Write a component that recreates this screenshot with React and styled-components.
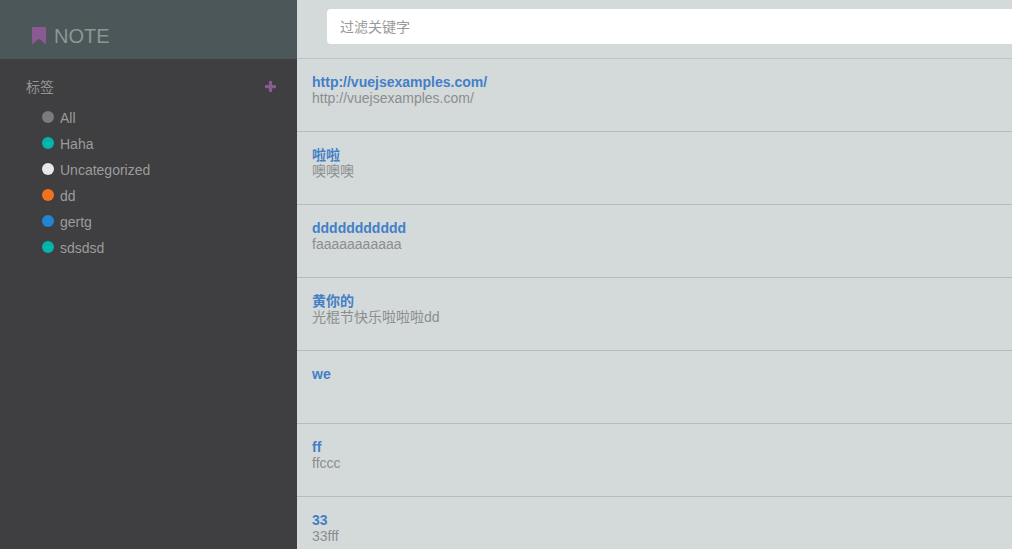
import React, { useState } from "react";
import styled, { createGlobalStyle } from "styled-components";

const GlobalStyle = createGlobalStyle`
  * {
    box-sizing: border-box;
  }
  body {
    margin: 0;
    background: #d4dada;
    font-family: "Liberation Sans", Arial, "Noto Sans CJK SC", sans-serif;
    font-size: 14px;
    line-height: 16px;
    color: #8b8e8e;
  }
`;
const Page = styled.div`
  display: flex;
  height: 100vh;
`;
const Sidebar = styled.aside`
  flex: 0 0 297px;
  background: #3f3e40;
`;
const Brand = styled.h1`
  display: flex;
  align-items: center;
  height: 59px;
  margin: 0;
  padding: 12px 32px 0;
  gap: 8px;
  background: #4b5759;
  color: #8f9596;
  font-size: 20px;
  font-weight: normal;
  line-height: 24px;
`;
const TagHeader = styled.div`
  display: flex;
  align-items: center;
  justify-content: space-between;
  padding: 20px 21px 0 26px;

  h2 {
    margin: 0;
    color: #949494;
    font-size: 14px;
    font-weight: normal;
    line-height: 16px;
  }
`;
const AddButton = styled.button`
  display: flex;
  padding: 0 0 1px;
  border: none;
  background: none;
  cursor: pointer;
`;
const TagList = styled.ul`
  margin: 0;
  padding: 10px 0 0 42px;
  list-style: none;
`;
const TagItem = styled.li`
  display: flex;
  align-items: center;
  height: 26px;
`;
const TagLink = styled.a`
  display: flex;
  gap: 6px;
  color: #9c9c9c;
  text-decoration: none;
`;
const Dot = styled.span`
  width: 12px;
  height: 12px;
  margin-top: 1px;
  border-radius: 50%;
  background: ${(props) => props.$color};
`;
const Main = styled.main`
  flex: 1;
  min-width: 0;
  overflow-y: auto;
  scrollbar-width: none;
`;
const SearchBar = styled.div`
  height: 59px;
  padding: 9px 0 0 30px;
  border-bottom: 1px solid #bfc5c5;
`;
const SearchInput = styled.input`
  display: block;
  width: 100%;
  height: 35px;
  padding: 0 13px;
  border: none;
  border-radius: 4px 0 0 4px;
  outline: none;
  background: #fff;
  color: #666;
  font: inherit;

  &::placeholder {
    color: #999;
    opacity: 1;
  }
`;
const Note = styled.article`
  height: 73px;
  padding: 15px;
  border-bottom: 1px solid #b6bcbc;
`;
const NoteTitle = styled.h3`
  height: 16px;
  margin: 0;
  color: #437fc7;
  font-size: 14px;
  line-height: 16px;
`;
const NoteText = styled.p`
  height: 16px;
  margin: 0;
`;

const tags = [
  { name: "All", color: "#7b7b7b" },
  { name: "Haha", color: "#00b5ad" },
  { name: "Uncategorized", color: "#e8e8e8" },
  { name: "dd", color: "#f2711c" },
  { name: "gertg", color: "#2185d0" },
  { name: "sdsdsd", color: "#00b5ad" },
];

const notes = [
  { title: "http://vuejsexamples.com/", text: "http://vuejsexamples.com/" },
  { title: "啦啦", text: "噢噢噢" },
  { title: "ddddddddddd", text: "faaaaaaaaaaa" },
  { title: "黄你的", text: "光棍节快乐啦啦啦dd" },
  { title: "we", text: "" },
  { title: "ff", text: "ffccc" },
  { title: "33", text: "33fff" },
];

function BookmarkIcon() {
  return (
    <svg width="14" height="17" viewBox="0 0 14 17" aria-hidden="true">
      <path
        d="M1 0h12q1 0 1 1v15.200q0 1.200-1 .5L7 11.800l-6 4.900q-1 .7-1-.5V1q0-1 1-1z"
        fill="#8c5a92"
      />
    </svg>
  );
}

function PlusIcon() {
  return (
    <svg width="11" height="11" viewBox="0 0 11 11" aria-hidden="true">
      <path
        d="M4.500 0h2q.6 0 .6.600V4h3.300q.6 0 .6.600v2q0 .6-.6.600H7.100v3.200q0 .6-.6.600h-2q-.6 0-.6-.600V7.200H.6Q0 7.200 0 6.600v-2Q0 4 .6 4h3.300V.600Q3.900 0 4.500 0z"
        fill="#8c5a92"
      />
    </svg>
  );
}

function App() {
  const [keyword, setKeyword] = useState("");
  const filtered = notes.filter((note) =>
    (note.title + note.text).includes(keyword)
  );

  return (
    <>
      <GlobalStyle />
      <Page>
        <Sidebar>
          <Brand>
            <BookmarkIcon />
            NOTE
          </Brand>
          <TagHeader>
            <h2>标签</h2>
            <AddButton type="button" aria-label="添加标签">
              <PlusIcon />
            </AddButton>
          </TagHeader>
          <TagList>
            {tags.map((tag) => (
              <TagItem key={tag.name}>
                <TagLink href="#">
                  <Dot $color={tag.color} />
                  {tag.name}
                </TagLink>
              </TagItem>
            ))}
          </TagList>
        </Sidebar>
        <Main>
          <SearchBar>
            <SearchInput
              type="text"
              aria-label="过滤关键字"
              placeholder="过滤关键字"
              value={keyword}
              onChange={(e) => setKeyword(e.target.value)}
            />
          </SearchBar>
          {filtered.map((note) => (
            <Note key={note.title}>
              <NoteTitle>{note.title}</NoteTitle>
              <NoteText>{note.text}</NoteText>
            </Note>
          ))}
        </Main>
      </Page>
    </>
  );
}

export default App;
